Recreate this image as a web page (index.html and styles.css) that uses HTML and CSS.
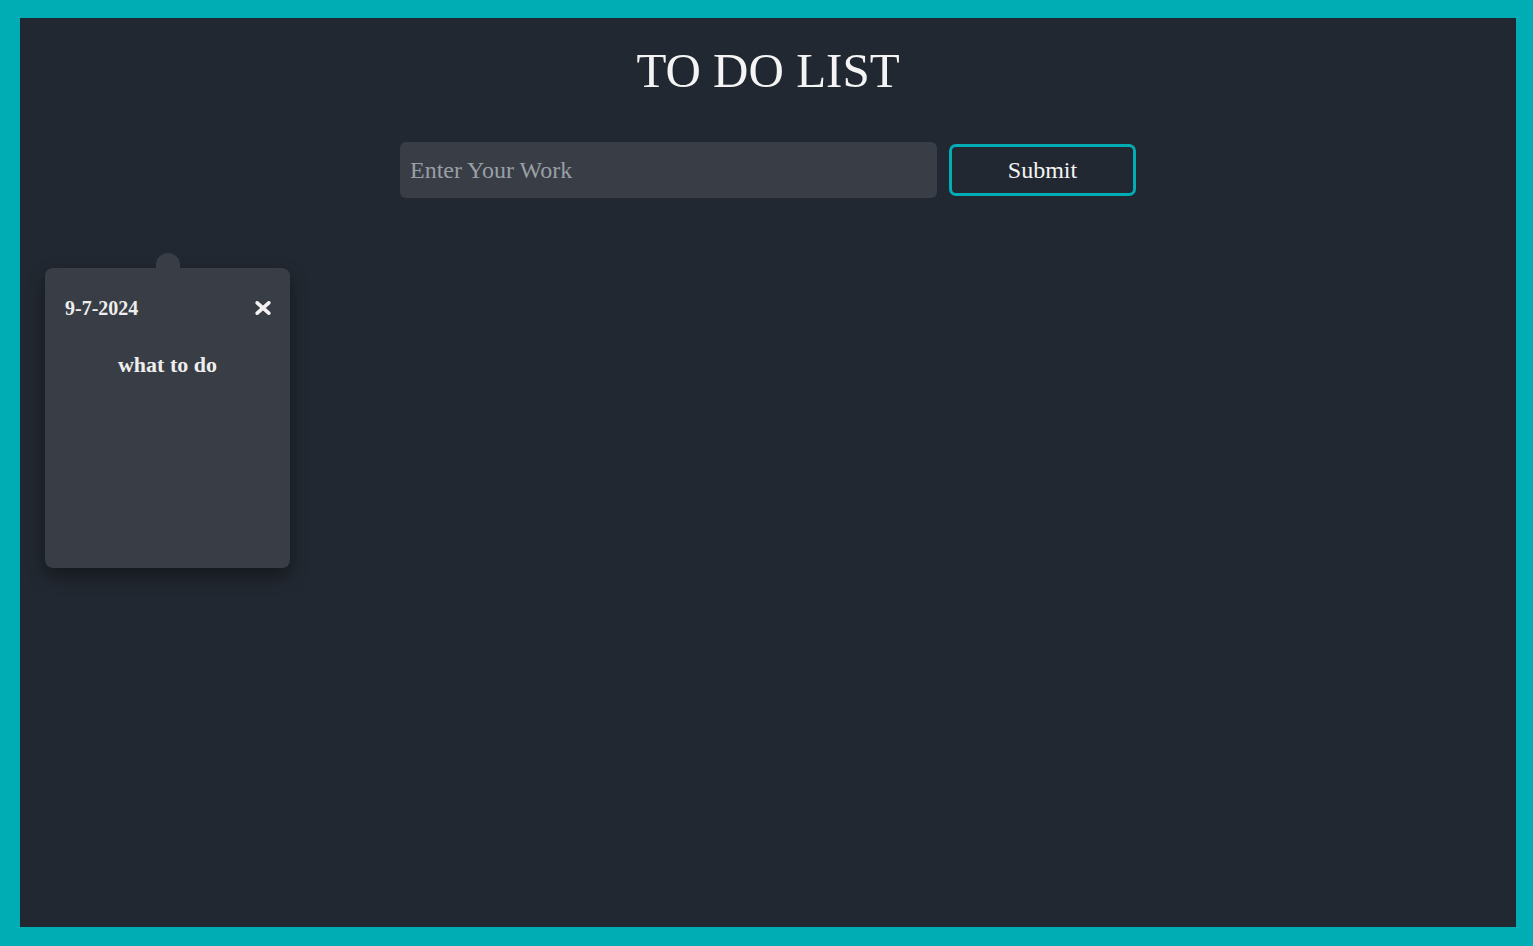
FILE: index.html
```html
<!DOCTYPE html>
<html lang="en">
<head>
<meta charset="utf-8">
<title>To Do List</title>
<link rel="stylesheet" href="styles.css">
</head>
<body>
<main class="app">
  <h1 class="title">TO DO LIST</h1>
  <form class="entry">
    <input class="entry-input" type="text" placeholder="Enter Your Work">
    <button class="entry-submit" type="button">Submit</button>
  </form>
  <section class="notes">
    <article class="note">
      <span class="note-tab"></span>
      <header class="note-head">
        <span class="note-date">9-7-2024</span>
        <span class="note-close" aria-label="delete">
          <svg width="16" height="14" viewBox="0 0 16 14"><path d="M2.2 1.8 L13.8 12.2 M13.8 1.8 L2.2 12.2" stroke="#f2f2f2" stroke-width="3.6" stroke-linecap="round" fill="none"/></svg>
        </span>
      </header>
      <p class="note-text">what to do</p>
    </article>
  </section>
</main>
</body>
</html>
```
FILE: styles.css
```css
* { box-sizing: border-box; }
html, body { margin: 0; height: 100%; }
body {
  background: #00adb5;
  padding: 18px 17px 19px 20px;
  font-family: "Liberation Serif", "Times New Roman", serif;
  color: #eeeeee;
}
.app {
  background: #222831;
  height: 100%;
  padding-top: 26px;
}
.title {
  margin: 0;
  text-align: center;
  font-size: 49px;
  font-weight: normal;
  line-height: 53px;
  color: #f4f4f4;
}
.entry {
  display: flex;
  justify-content: center;
  align-items: center;
  gap: 12px;
  margin-top: 45px;
}
.entry-input {
  width: 537px;
  height: 56px;
  border: none;
  border-radius: 6px;
  background: #393e46;
  color: #eeeeee;
  font-family: "Liberation Serif", "Times New Roman", serif;
  font-size: 24px;
  padding: 0 10px;
  outline: none;
}
.entry-input::placeholder { color: #9a9ea5; }
.entry-submit {
  width: 187px;
  height: 52px;
  border: 3px solid #00adb5;
  border-radius: 7px;
  background: #222831;
  color: #f4f4f4;
  font-family: "Liberation Serif", "Times New Roman", serif;
  font-size: 24px;
  cursor: pointer;
}
.notes {
  display: flex;
  flex-wrap: wrap;
  gap: 25px;
  padding: 70px 25px 0;
}
.note {
  position: relative;
  width: 245px;
  height: 300px;
  background: #393e46;
  border-radius: 8px;
  box-shadow: 0 8px 18px rgba(0, 0, 0, 0.4);
  padding: 20px 20px;
}
.note-tab {
  position: absolute;
  top: -15px;
  left: 50%;
  width: 24px;
  height: 30px;
  margin-left: -12px;
  border-radius: 12px 12px 0 0;
  background: #393e46;
}
.note-head {
  display: flex;
  justify-content: space-between;
  align-items: center;
  height: 40px;
}
.note-date {
  font-size: 20px;
  font-weight: bold;
}
.note-close {
  display: flex;
  margin-right: -1px;
}
.note-text {
  margin: 24px 0 0;
  text-align: center;
  font-size: 22px;
  font-weight: bold;
}
```
